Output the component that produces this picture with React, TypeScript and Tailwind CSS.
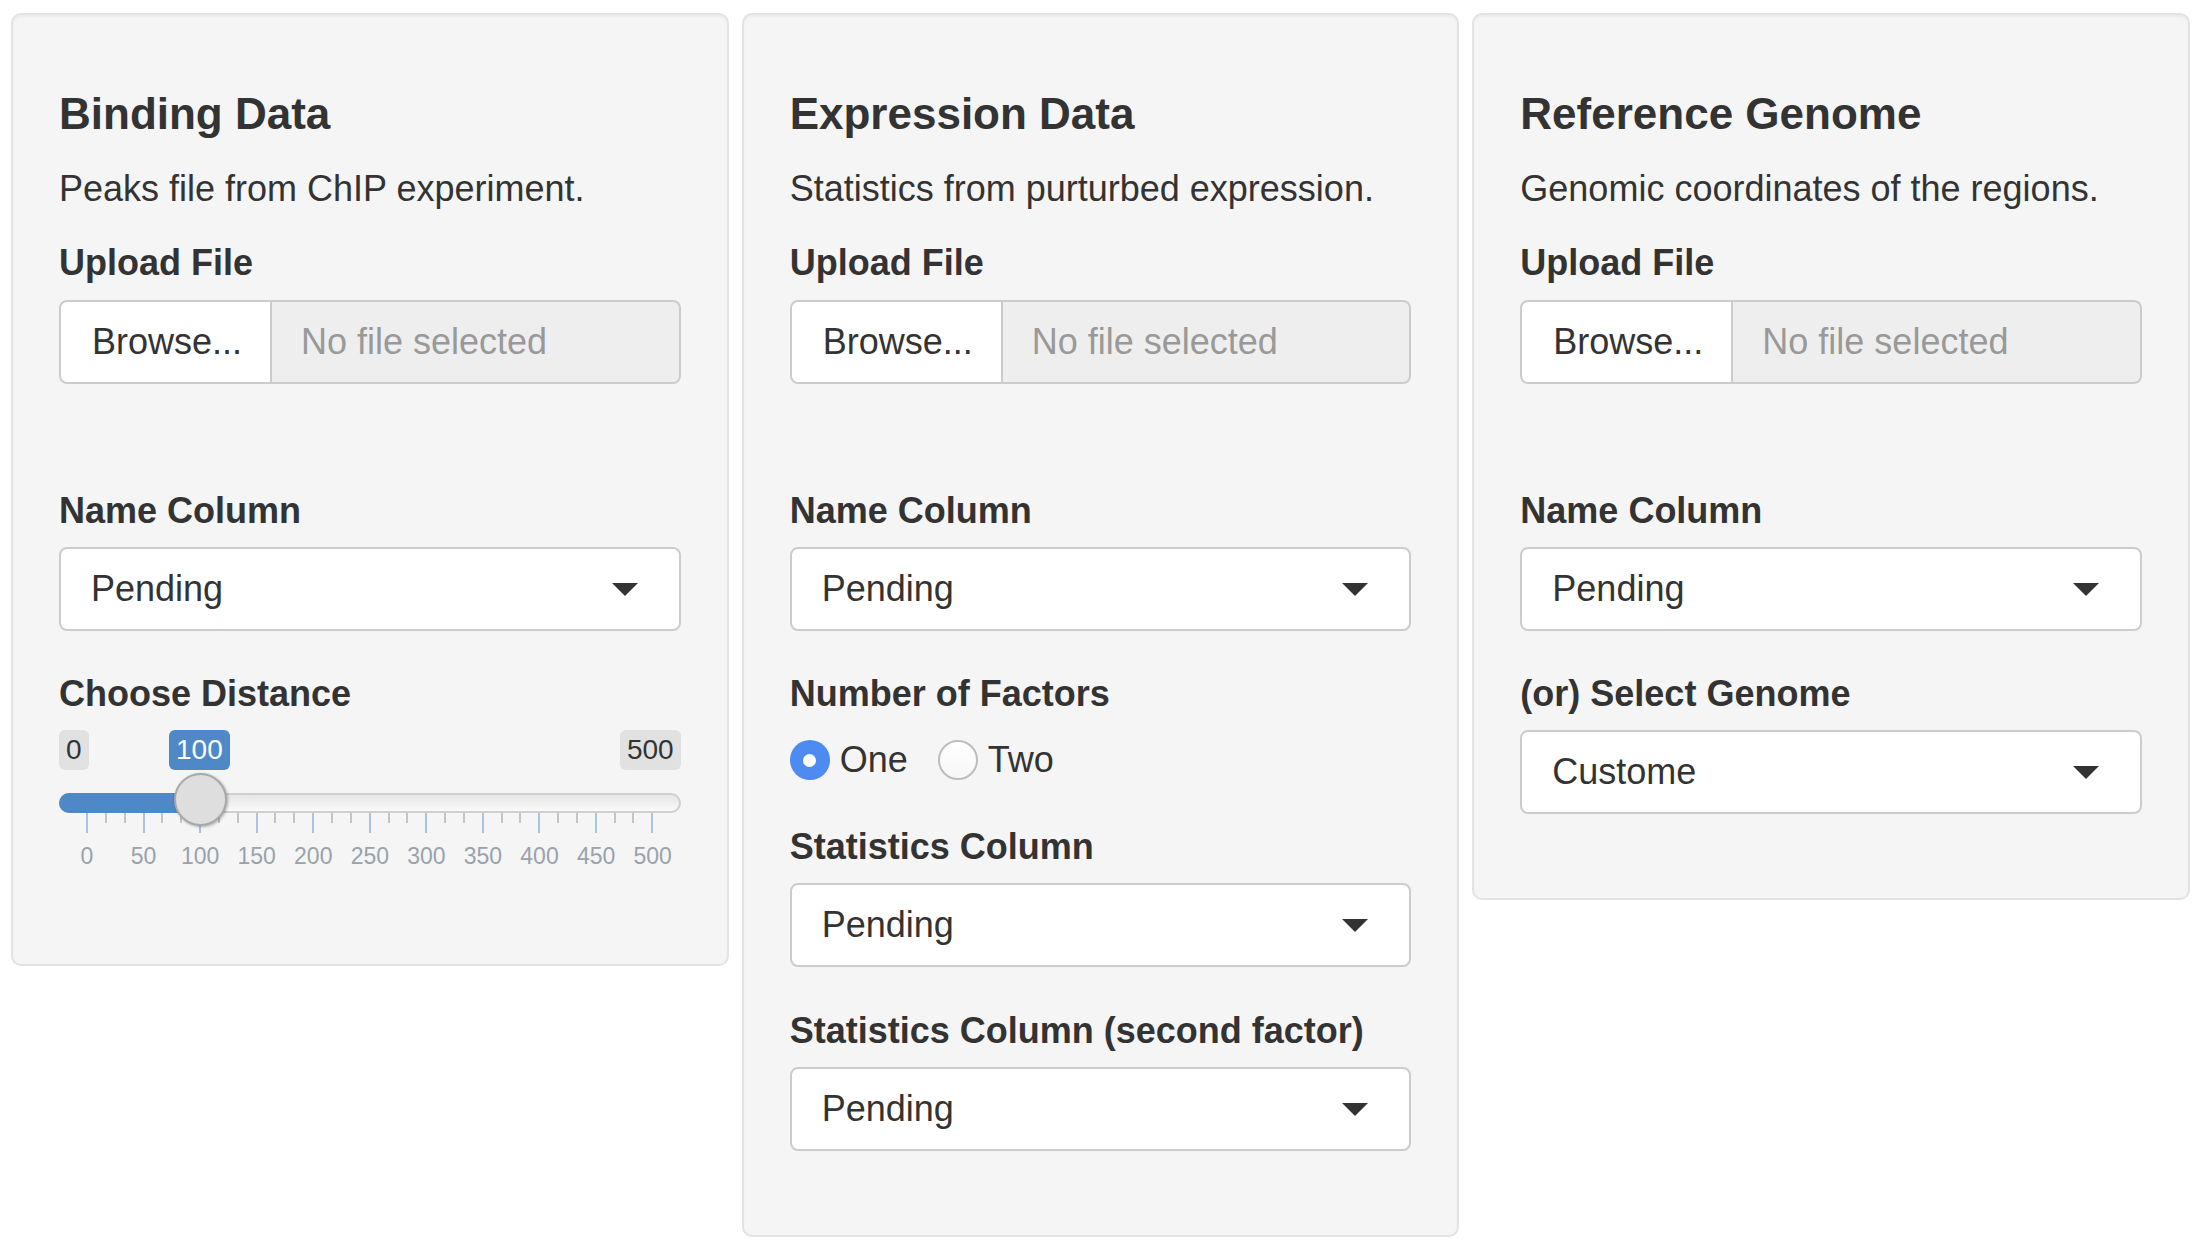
import React from 'react';

const FONT = { fontFamily: '"Liberation Sans", Arial, sans-serif' };

const Label: React.FC<{ children: React.ReactNode; className?: string }> = ({ children, className = '' }) => (
  <div className={`text-[36px] leading-[40px] font-bold text-[#333] ${className}`}>{children}</div>
);

const FileInput: React.FC = () => (
  <div className="mt-[17px] flex h-[84px]">
    <div className="flex w-[213px] items-center rounded-l-[8px] border-2 border-[#ccc] bg-white pl-[31px] text-[36px] text-[#333]">
      Browse...
    </div>
    <div className="flex flex-1 items-center rounded-r-[8px] border-2 border-l-0 border-[#ccc] bg-[#eee] pl-[29px] text-[36px] text-[#999]">
      No file selected
    </div>
  </div>
);

const Select: React.FC<{ value: string }> = ({ value }) => (
  <div className="mt-[16px] flex h-[84px] items-center justify-between rounded-[8px] border-2 border-[#ccc] bg-white pl-[30px] pr-[41px] text-[36px] text-[#333]">
    <span>{value}</span>
    <svg width="26" height="13" viewBox="0 0 26 13">
      <path d="M0 0 L26 0 L13 13 Z" fill="#333" />
    </svg>
  </div>
);

const Panel: React.FC<{ title: string; desc: string; children: React.ReactNode }> = ({ title, desc, children }) => (
  <div className="rounded-[10px] border-2 border-[#e3e3e3] bg-[#f5f5f5] px-[46px] pt-[75px] pb-[84px] shadow-[inset_0_2px_2px_rgba(0,0,0,0.04)]">
    <h3 className="text-[44px] leading-[48px] font-bold text-[#333]">{title}</h3>
    <p className="mt-[31px] text-[36px] leading-[40px] text-[#333]">{desc}</p>
    {children}
  </div>
);

const Slider: React.FC = () => {
  const ticks = Array.from({ length: 31 }, (_, i) => i);
  const labels = [0, 50, 100, 150, 200, 250, 300, 350, 400, 450, 500];
  return (
    <div className="mt-[16px] h-[150px]">
      {/* min / value / max */}
      <div className="relative flex h-[40px] justify-between text-[28px] leading-[40px]">
        <span className="rounded-[6px] bg-[#e1e1e1] px-[7px] text-[#333]">0</span>
        <span className="absolute left-[110px] top-0 rounded-[6px] bg-[#4f88c6] px-[7px] text-white">100</span>
        <span className="rounded-[6px] bg-[#e1e1e1] px-[7px] text-[#333]">500</span>
      </div>
      {/* track */}
      <div className="relative mt-[23px] h-[20px] rounded-full border-2 border-[#cfcfcf] bg-gradient-to-b from-[#e6e6e6] to-[#fafafa]">
        <div className="absolute -left-[2px] -top-[2px] h-[20px] w-[142px] rounded-l-full bg-[#4f88c6]" />
        <div className="absolute left-[113px] -top-[22px] h-[53px] w-[53px] rounded-full border-2 border-[#a9a9a9] bg-[#dedede] shadow-[1px_1px_3px_rgba(0,0,0,0.3)]" />
      </div>
      {/* grid ticks */}
      <div className="mx-[27px] flex items-start justify-between">
        {ticks.map((i) => (
          <div
            key={i}
            className={i % 3 === 0 ? 'h-[20px] w-[2px] bg-[#a9c3e1]' : 'h-[10px] w-[2px] bg-[#c4c4c4]'}
          />
        ))}
      </div>
      {/* grid labels */}
      <div className="mx-[28px] mt-[10px] flex justify-between text-[23px] leading-[26px] text-[#9aa2ab]">
        {labels.map((l) => (
          <div key={l} className="flex w-0 justify-center">
            <span>{l}</span>
          </div>
        ))}
      </div>
    </div>
  );
};

const Radio: React.FC<{ checked?: boolean; label: string }> = ({ checked, label }) => (
  <div className="flex items-center gap-[10px]">
    {checked ? (
      <div className="flex h-[40px] w-[40px] items-center justify-center rounded-full bg-[#4d8bf3]">
        <div className="h-[13px] w-[13px] rounded-full bg-white" />
      </div>
    ) : (
      <div className="h-[40px] w-[40px] rounded-full border-2 border-[#bdbdbd] bg-gradient-to-b from-white to-[#f7f7f7]" />
    )}
    <span className="text-[36px] leading-[40px] text-[#333]">{label}</span>
  </div>
);

export default function App() {
  return (
    <div className="min-h-screen bg-white" style={FONT}>
      <div className="grid grid-cols-3 items-start gap-[13px] pl-[11px] pr-[14px] pt-[13px]">
        <Panel title="Binding Data" desc="Peaks file from ChIP experiment.">
          <Label className="mt-[34px]">Upload File</Label>
          <FileInput />
          <Label className="mt-[107px]">Name Column</Label>
          <Select value="Pending" />
          <Label className="mt-[43px]">Choose Distance</Label>
          <Slider />
        </Panel>

        <Panel title="Expression Data" desc="Statistics from purturbed expression.">
          <Label className="mt-[34px]">Upload File</Label>
          <FileInput />
          <Label className="mt-[107px]">Name Column</Label>
          <Select value="Pending" />
          <Label className="mt-[43px]">Number of Factors</Label>
          <div className="mt-[26px] flex gap-[30px]">
            <Radio checked label="One" />
            <Radio label="Two" />
          </div>
          <Label className="mt-[47px]">Statistics Column</Label>
          <Select value="Pending" />
          <Label className="mt-[44px]">Statistics Column (second factor)</Label>
          <Select value="Pending" />
        </Panel>

        <Panel title="Reference Genome" desc="Genomic coordinates of the regions.">
          <Label className="mt-[34px]">Upload File</Label>
          <FileInput />
          <Label className="mt-[107px]">Name Column</Label>
          <Select value="Pending" />
          <Label className="mt-[43px]">(or) Select Genome</Label>
          <Select value="Custome" />
        </Panel>
      </div>
    </div>
  );
}
